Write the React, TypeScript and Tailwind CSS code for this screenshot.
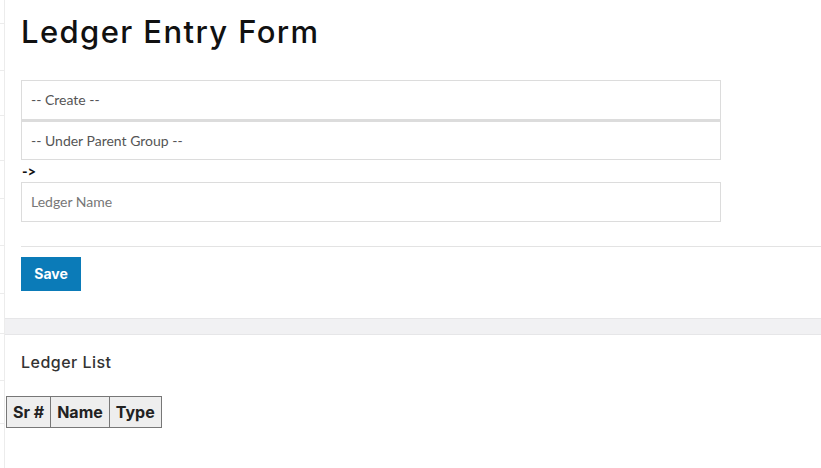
import React from 'react';

const heading = { fontFamily: 'Inter, "Open Sans", sans-serif' };

const App: React.FC = () => {
  const stripLines = [23, 70, 115, 160, 198, 245, 293, 333, 380, 423];

  return (
    <div className="flex min-h-[468px] w-[821px] bg-white" style={{ fontFamily: 'Lato, "Open Sans", sans-serif' }}>
      {/* Left strip */}
      <div className="relative w-[5px] shrink-0 border-r border-[#ececec]">
        {stripLines.map((y) => (
          <div key={y} className="absolute left-0 h-px w-[5px] bg-[#ececec]" style={{ top: y }} />
        ))}
      </div>

      <div className="flex flex-1 flex-col">
        {/* Entry card */}
        <div className="border-b border-[#e6e6e8] pb-[27px] pl-4">
          <h1 className="pt-[13px] text-[31px] font-medium leading-[38px] tracking-[0.045em] text-[#111]" style={heading}>
            Ledger Entry Form
          </h1>

          <div className="mt-[29px] w-[700px]">
            <div className="flex h-10 items-center border border-[#dcdcdc] px-[9px] text-sm text-[#555]">-- Create --</div>
            <div className="flex h-10 items-center border border-t-2 border-[#dcdcdc] px-[9px] text-sm text-[#555]">
              -- Under Parent Group --
            </div>
            <div className="h-[22px] pl-px text-[15px] font-bold leading-[22px] text-[#111]">-&gt;</div>
            <div className="flex h-10 items-center border border-[#dcdcdc] px-[9px] text-sm text-[#777]">Ledger Name</div>
          </div>

          <div className="mt-6 h-px bg-[#e3e3e3]" />

          <button className="mt-[10px] h-[34px] w-[60px] bg-[#0b7bb8] text-sm font-bold text-white" style={heading}>
            Save
          </button>
        </div>

        {/* Gap band */}
        <div className="h-[15px] bg-[#f1f1f3]" />

        {/* List card */}
        <div className="flex-1 border-t border-[#e6e6e8]">
          <h2 className="pl-4 pt-[17px] text-[16px] font-medium leading-5 tracking-[0.03em] text-[#333]" style={heading}>
            Ledger List
          </h2>
          <table className="ml-px mt-[24px] border-collapse text-[16px] font-bold text-[#222]" style={heading}>
            <thead>
              <tr className="bg-[#eeeeee]">
                <th className="h-[31px] border border-[#777] px-[6px]">Sr #</th>
                <th className="h-[31px] border border-[#777] px-[6px]">Name</th>
                <th className="h-[31px] border border-[#777] px-[6px]">Type</th>
              </tr>
            </thead>
          </table>
        </div>
      </div>
    </div>
  );
};

export default App;
